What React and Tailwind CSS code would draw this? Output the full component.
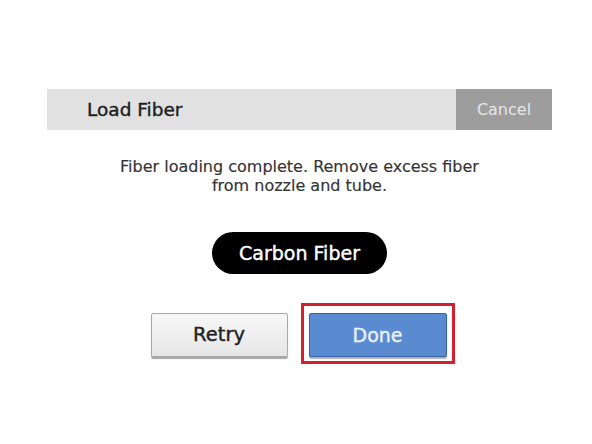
export default function App() {
  return (
    <div
      className="h-[444px] w-[592px] bg-white"
      style={{ fontFamily: '"DejaVu Sans", Verdana, sans-serif' }}
    >
      <div className="ml-[47px] w-[505px] pt-[89px]">
        <div className="flex h-[41px] items-stretch bg-[#e1e1e1]">
          <div className="flex flex-1 items-center pl-[40px] text-[18.5px] text-[#1e1e1e] [-webkit-text-stroke:0.4px_#1e1e1e]">
            Load Fiber
          </div>
          <button className="w-[96px] bg-[#9d9d9d] text-[16px] text-[#e6e6e6]">
            Cancel
          </button>
        </div>

        <p className="mt-[27px] text-center text-[16px] leading-[19px] text-[#333] [-webkit-text-stroke:0.15px_#333]">
          Fiber loading complete. Remove excess fiber
          <br />
          from nozzle and tube.
        </p>

        <div className="mt-[37px] flex justify-center">
          <div className="flex h-[42px] w-[175px] items-center justify-center rounded-full bg-black text-[19px] text-white [-webkit-text-stroke:0.4px_#fff]">
            Carbon Fiber
          </div>
        </div>

        <div className="mt-[29px] flex items-start justify-center gap-[13px] pl-[6px]">
          <button className="mt-[10px] h-[44px] w-[137px] rounded-[2px] border border-[#a8a8a8] bg-gradient-to-b from-[#f7f7f7] to-[#e6e6e6] text-[19.5px] text-[#222] shadow-[0_2px_1px_rgba(0,0,0,0.35)] [-webkit-text-stroke:0.4px_#222]">
            Retry
          </button>
          <div className="border-[3px] border-[#d4202c] px-[5px] pt-[7px] pb-[4px]">
            <button className="h-[44px] w-[138px] rounded-[2px] border border-[#3a64a8] bg-[#5a8bd0] text-[19px] text-[#e8f0fb] shadow-[0_2px_1px_rgba(0,0,0,0.3)] [-webkit-text-stroke:0.4px_#e8f0fb]">
              Done
            </button>
          </div>
        </div>
      </div>
    </div>
  );
}
